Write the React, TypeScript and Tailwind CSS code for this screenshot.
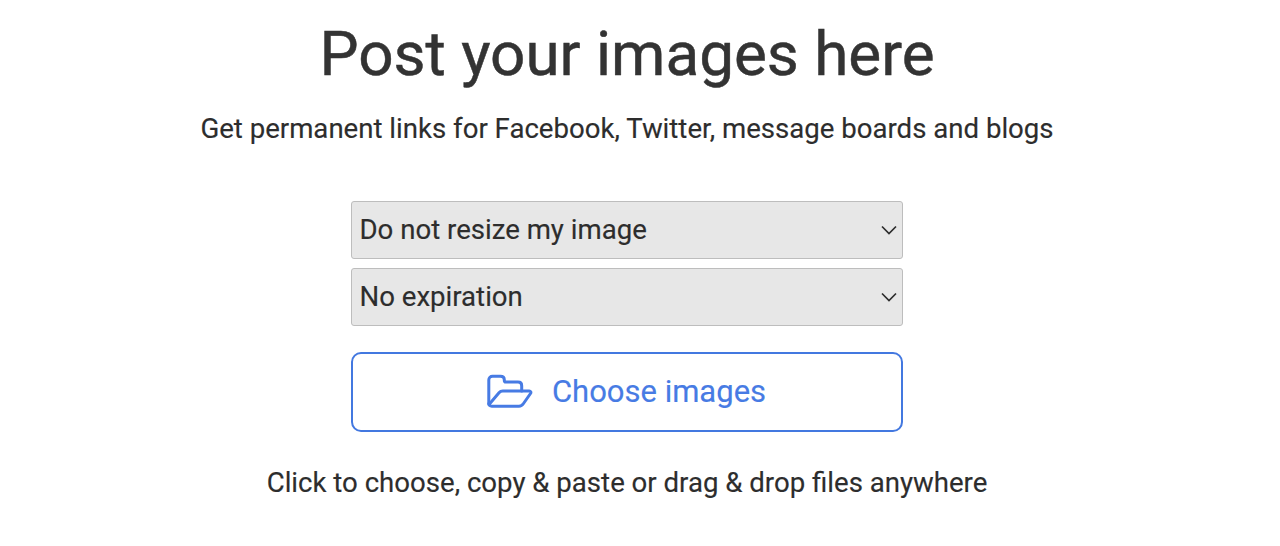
import { useState } from 'react';

const FolderOpenIcon = () => (
  <svg
    viewBox="0 0 46 34"
    className="mb-[3px] h-[34px] w-[46px]"
    fill="none"
    stroke="currentColor"
    strokeWidth="3"
    strokeLinejoin="round"
    strokeLinecap="round"
  >
    <path d="M1.800 30V6C1.800 3.600 3.400 2.300 5.500 2.300H13.500C16 2.300 17.300 3.500 17.300 5.800V6.500C17.300 7.500 17.900 8.100 18.900 8.100H31C33.200 8.100 34.700 9.500 34.700 11.700V17" />
    <path d="M2.500 30L12 18.800C13 17.600 14.200 17 15.800 17H42.200C43.800 17 44.300 18.300 43.500 19.500L36.500 29.500C35.300 31.300 34 32.200 32 32.200H4.800C2.800 32.200 1.800 31.200 1.800 29.500" />
  </svg>
);

const ChevronIcon = () => (
  <svg
    viewBox="0 0 16 10"
    className="pointer-events-none absolute right-[6.5px] top-1/2 h-[10px] w-[16px] -translate-y-1/2"
    fill="none"
    stroke="#2d2d2d"
    strokeWidth="1.700"
  >
    <path d="M1 1.500L8 8.500L15 1.500" />
  </svg>
);

interface SelectProps {
  label: string;
  options: string[];
}

const Select = ({ label, options }: SelectProps) => {
  const [value, setValue] = useState(options[0]);

  return (
    <div className="relative">
      <select
        aria-label={label}
        value={value}
        onChange={(e) => setValue(e.target.value)}
        className="block h-[58px] w-full appearance-none rounded-[3px] border border-[#bdbdbd] bg-[#e7e7e7] px-[7.5px] text-[27.6px] text-[#2d2d2d]"
      >
        {options.map((option) => (
          <option key={option}>{option}</option>
        ))}
      </select>
      <ChevronIcon />
    </div>
  );
};

const App = () => {
  return (
    <main className="flex h-[546px] w-[1254px] flex-col items-center bg-white font-['Roboto',sans-serif] text-[#2d2d2d] [-webkit-text-stroke:0.15px]">
      <h1 className="mt-[16px] whitespace-nowrap text-[62px] leading-[76px] text-[#333] [-webkit-text-stroke:0.5px]">
        Post your images here
      </h1>
      <p className="mt-[21px] whitespace-nowrap text-[27.6px] leading-[32px]">
        Get permanent links for Facebook, Twitter, message boards and blogs
      </p>

      <div className="mt-[56px] flex w-[552px] flex-col gap-[9px]">
        <Select label="Resize" options={['Do not resize my image']} />
        <Select label="Expiration" options={['No expiration']} />
      </div>

      <button className="mt-[26px] flex h-[80px] w-[552px] items-center justify-center gap-[19px] rounded-[10px] border-2 border-[#4378e0] pr-px text-[31px] text-[#477be4]">
        <FolderOpenIcon />
        <span>Choose images</span>
      </button>

      <p className="mt-[35px] whitespace-nowrap text-[27.6px] leading-[32px]">
        Click to choose, copy &amp; paste or drag &amp; drop files anywhere
      </p>
    </main>
  );
};

export default App;
